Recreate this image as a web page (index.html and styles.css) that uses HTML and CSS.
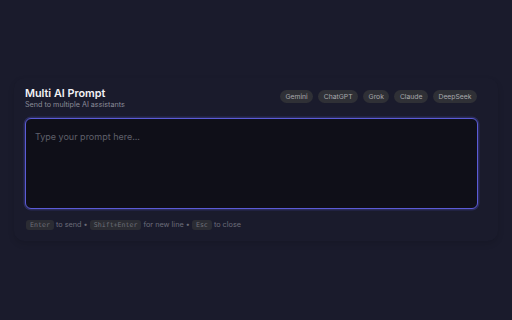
FILE: index.html
```html
<!DOCTYPE html>
<html lang="en">
  <head>
    <meta charset="UTF-8" />
    <meta name="viewport" content="width=device-width, initial-scale=1.0" />
    <title>Multi AI Prompt</title>
    <link rel="stylesheet" href="styles.css">
  </head>
  <body>
    <div class="prompt-panel">
      <div class="panel-header">
        <div class="panel-title">
          <h1>Multi AI Prompt</h1>
          <p>Send to multiple AI assistants</p>
        </div>
        <div class="ai-chips">
          <span class="chip">Gemini</span>
          <span class="chip">ChatGPT</span>
          <span class="chip">Grok</span>
          <span class="chip">Claude</span>
          <span class="chip">DeepSeek</span>
        </div>
      </div>
      <textarea class="prompt-input" placeholder="Type your prompt here..." autofocus></textarea>
      <div class="hints">
        <kbd>Enter</kbd> to send &bull; <kbd>Shift+Enter</kbd> for new line &bull; <kbd>Esc</kbd> to close
      </div>
    </div>
  </body>
</html>
```

FILE: styles.css
```css
body {
  font-family: Inter, "Noto Sans", sans-serif;
  background-color: #1a1b2c;
  margin: 0;
  padding: 78px 14px 0;
  min-height: 100vh;
  box-sizing: border-box;
}
.prompt-panel {
  background-color: #1a1b2c;
  border-radius: 10px;
  box-shadow: 0 3px 6px rgba(0, 0, 0, 0.12);
  padding: 9px 20px 10px 11px;
}
.panel-header {
  display: flex;
  justify-content: space-between;
  align-items: center;
  margin-bottom: 9px;
}
.panel-title h1 {
  margin: 0;
  font-size: 10.8px;
  font-weight: 600;
  color: #f2f2f5;
  line-height: 13px;
}
.panel-title p {
  margin: 0;
  font-size: 7.2px;
  color: #8b8c99;
  line-height: 9px;
}
.ai-chips {
  display: flex;
  gap: 5px;
  margin-top: -4px;
  margin-right: 1px;
}
.chip {
  background-color: #2f3036;
  color: #a8a8ad;
  font-size: 6.8px;
  line-height: 13px;
  padding: 0 5.5px;
  border-radius: 7px;
}
.prompt-input {
  display: block;
  width: 100%;
  height: 91px;
  box-sizing: border-box;
  background-color: #0f0f18;
  border: 1px solid #5b5bd6;
  border-radius: 6px;
  box-shadow: 0 0 0 1.5px rgba(91, 91, 214, 0.25);
  color: #e0e0e6;
  font-family: Inter, "Noto Sans", sans-serif;
  font-size: 9px;
  padding: 12px 9px 10px;
  resize: none;
  outline: none;
  caret-color: #aaa;
}
.prompt-input::placeholder {
  color: #5f606b;
}
.hints {
  margin-top: 10px;
  font-size: 7.3px;
  color: #6c6d7a;
  line-height: 11px;
  padding-left: 1px;
}
.hints kbd {
  font-family: "DejaVu Sans Mono", monospace;
  font-size: 6.6px;
  background-color: #2b2c33;
  color: #6e6f78;
  border-radius: 3px;
  padding: 1px 4px;
}
```
